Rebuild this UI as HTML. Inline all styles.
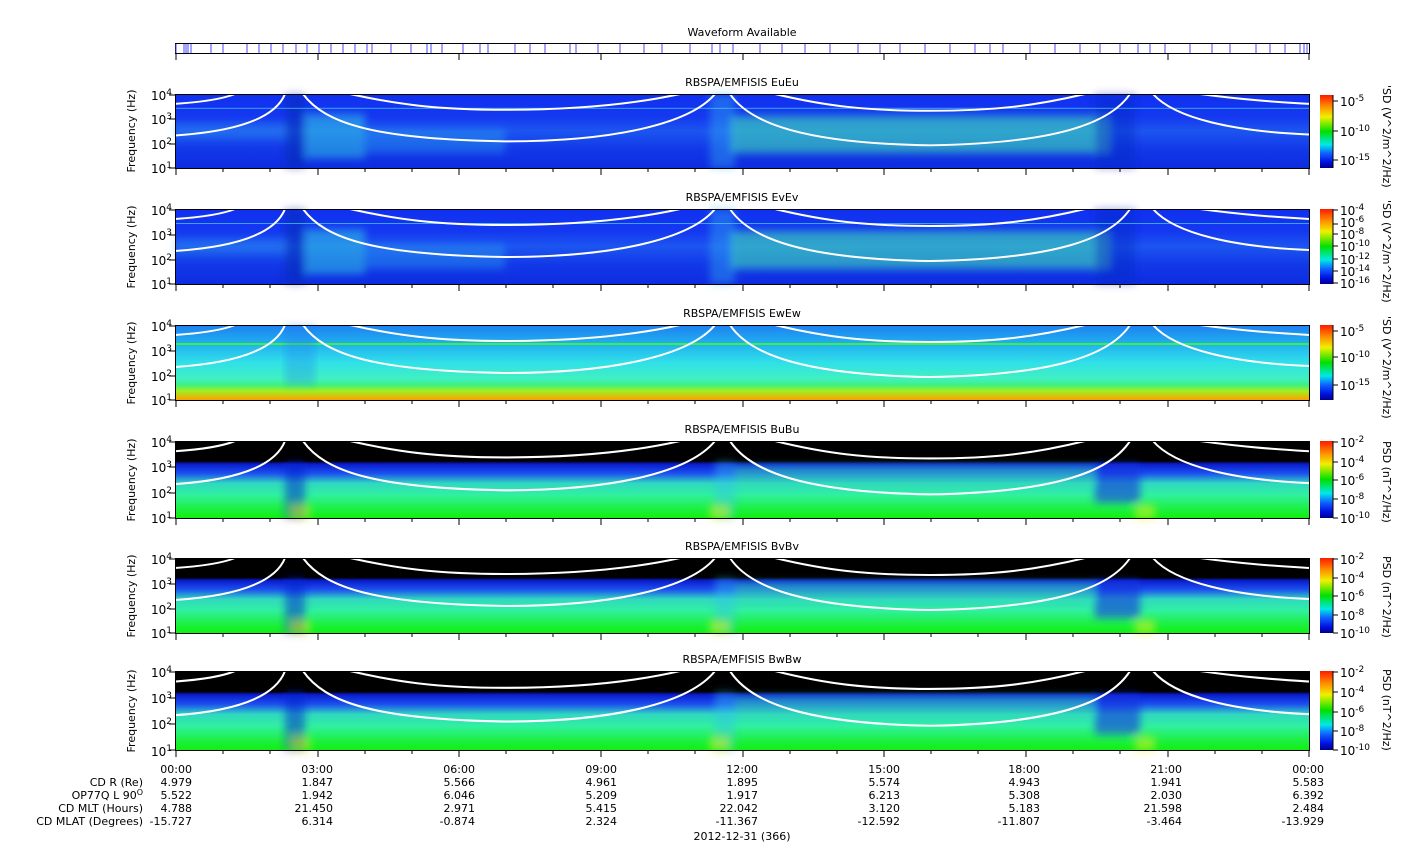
<!DOCTYPE html>
<html><head><meta charset="utf-8"><style>
html,body{margin:0;padding:0;background:#fff;}
svg{display:block;font-family:"DejaVu Sans","Liberation Sans",sans-serif;}
</style></head><body>
<svg width="1408" height="859" viewBox="0 0 1408 859" xmlns="http://www.w3.org/2000/svg">
<defs>
<linearGradient id="cb" x1="0" y1="0" x2="0" y2="1">
<stop offset="0" stop-color="#ff1a00"/><stop offset="0.15" stop-color="#ff8800"/><stop offset="0.3" stop-color="#f0f000"/><stop offset="0.5" stop-color="#00e000"/><stop offset="0.68" stop-color="#00e8e8"/><stop offset="0.8" stop-color="#1060ff"/><stop offset="0.92" stop-color="#0010e0"/><stop offset="1" stop-color="#00008a"/>
</linearGradient>
<linearGradient id="gE" x1="0" y1="0" x2="0" y2="1">
<stop offset="0" stop-color="#1030f0"/><stop offset="0.3" stop-color="#1438f0"/><stop offset="0.5" stop-color="#1c55f0"/><stop offset="0.75" stop-color="#1238e8"/><stop offset="1" stop-color="#0e2ce0"/>
</linearGradient>
<linearGradient id="gW" x1="0" y1="0" x2="0" y2="1">
<stop offset="0" stop-color="#1e80f0"/><stop offset="0.25" stop-color="#20b0f0"/><stop offset="0.5" stop-color="#30e0e8"/><stop offset="0.72" stop-color="#40f0c0"/><stop offset="0.8" stop-color="#40f080"/><stop offset="0.88" stop-color="#a0f020"/><stop offset="1" stop-color="#ffa000"/>
</linearGradient>
<linearGradient id="gB" x1="0" y1="0" x2="0" y2="1">
<stop offset="0" stop-color="#000"/><stop offset="0.26" stop-color="#000"/><stop offset="0.3" stop-color="#0a1ccc"/><stop offset="0.42" stop-color="#1c50f0"/><stop offset="0.55" stop-color="#30d8c0"/><stop offset="0.7" stop-color="#30f0a0"/><stop offset="0.85" stop-color="#20f050"/><stop offset="1" stop-color="#10f010"/>
</linearGradient>
<filter id="bl" x="-10%" y="-30%" width="120%" height="160%"><feGaussianBlur stdDeviation="4"/></filter>
<g id="curves" fill="none" stroke="#fff" stroke-width="2">
<path d="M0,42 C60,38 100,25 110,0"/>
<path d="M0,10 C30,8 50,4 60,0"/>
<path d="M128,0 C150,30 200,46 330,48 C440,48 515,30 540,0"/>
<path d="M175,0 C220,10 260,16 330,16 C400,16 460,10 505,0"/>
<path d="M555,0 C575,30 630,50 755,52 C880,50 935,30 955,0"/>
<path d="M600,0 C650,12 690,17 755,17 C820,17 860,12 910,0"/>
<path d="M978,0 C1000,25 1060,38 1134,41"/>
<path d="M1025,0 C1070,6 1100,8 1134,10"/>
</g>
<g id="eblobs" filter="url(#bl)">
<rect x="130" y="20" width="60" height="45" fill="#30e0e0" opacity="0.45"/>
<rect x="190" y="35" width="140" height="25" fill="#30c0f0" opacity="0.3"/>
<rect x="555" y="22" width="380" height="38" fill="#40e8b0" opacity="0.55"/>
<rect x="110" y="0" width="20" height="75" fill="#0a20a0" opacity="0.4"/>
<rect x="535" y="0" width="25" height="75" fill="#30b0f0" opacity="0.4"/>
<rect x="920" y="0" width="40" height="75" fill="#0a20c0" opacity="0.4"/>
<rect x="0" y="30" width="110" height="15" fill="#30a0f0" opacity="0.3"/>
</g>
<g id="bblobs" filter="url(#bl)">
<rect x="110" y="20" width="20" height="56" fill="#0a20d0" opacity="0.5"/>
<rect x="540" y="20" width="20" height="56" fill="#30c0f0" opacity="0.4"/>
<rect x="920" y="22" width="45" height="38" fill="#1030e0" opacity="0.6"/>
<rect x="560" y="24" width="360" height="18" fill="#30e0b0" opacity="0.5"/>
<rect x="115" y="62" width="20" height="14" fill="#f0f020" opacity="0.5"/>
<rect x="535" y="62" width="20" height="14" fill="#f0f020" opacity="0.5"/>
<rect x="960" y="62" width="20" height="14" fill="#f0f020" opacity="0.5"/>
</g>
</defs>

<g font-size="11" fill="#000">
<text x="742" y="36" text-anchor="middle">Waveform Available</text>
<rect x="175.5" y="43.5" width="1134" height="10" fill="#fff" stroke="#000"/>
<g stroke="#4a4aff" stroke-width="1">
<path d="M176,44v9M184,44v9M186,44v9M188,44v9M191,44v9M211,44v9M223,44v9M247,44v9M259,44v9M271,44v9M283,44v9M296,44v9M307,44v9M319,44v9M331,44v9M343,44v9M355,44v9M367,44v9M372,44v9M391,44v9M411,44v9M427,44v9M431,44v9M442,44v9M463,44v9M480,44v9M488,44v9M515,44v9M530,44v9M545,44v9M570,44v9M576,44v9M598,44v9M620,44v9M644,44v9M662,44v9M690,44v9M712,44v9M720,44v9M733,44v9M760,44v9M782,44v9M805,44v9M830,44v9M858,44v9M880,44v9M900,44v9M925,44v9M950,44v9M975,44v9M990,44v9M1003,44v9M1030,44v9M1055,44v9M1080,44v9M1100,44v9M1120,44v9M1138,44v9M1150,44v9M1165,44v9M1190,44v9M1212,44v9M1230,44v9M1256,44v9M1270,44v9M1285,44v9M1300,44v9M1304,44v9M1307,44v9"/>
</g>
<path d="M176,54v6M318,54v6M459,54v6M601,54v6M743,54v6M884,54v6M1026,54v6M1168,54v6M1309,54v6" stroke="#000"/>
</g>

<g transform="translate(175,94) scale(1,0.987)">
<rect width="1134" height="75" fill="url(#gE)"/>
<use href="#eblobs"/>
<rect x="0" y="14" width="1134" height="1" fill="#50d0f0" opacity="0.7"/>
<use href="#curves"/>
</g>
<g transform="translate(175,209)">
<rect width="1134" height="75" fill="url(#gE)"/>
<use href="#eblobs"/>
<rect x="0" y="14" width="1134" height="1" fill="#50d0f0" opacity="0.7"/>
<use href="#curves"/>
</g>
<g transform="translate(175,325)">
<rect width="1134" height="75" fill="url(#gW)"/>
<rect x="0" y="18" width="1134" height="2" fill="#40f040"/>
<rect x="110" y="0" width="30" height="60" fill="#2080f0" opacity="0.3" filter="url(#bl)"/>
<use href="#curves"/>
</g>
<g transform="translate(175,441) scale(1,1.027)">
<rect width="1134" height="75" fill="url(#gB)"/>
<use href="#bblobs"/>
<use href="#curves"/>
</g>
<g transform="translate(175,558)">
<rect width="1134" height="75" fill="url(#gB)"/>
<use href="#bblobs"/>
<use href="#curves"/>
</g>
<g transform="translate(175,671) scale(1,1.053)">
<rect width="1134" height="75" fill="url(#gB)"/>
<use href="#bblobs"/>
<use href="#curves"/>
</g>

<g font-size="11" fill="#000">
<g fill="none" stroke="#000">
<rect x="175.5" y="94.5" width="1134" height="74"/>
<rect x="175.5" y="209.5" width="1134" height="75"/>
<rect x="175.5" y="325.5" width="1134" height="75"/>
<rect x="175.5" y="441.5" width="1134" height="77"/>
<rect x="175.5" y="558.5" width="1134" height="75"/>
<rect x="175.5" y="671.5" width="1134" height="79"/>
</g>
<text x="742" y="86" text-anchor="middle">RBSPA/EMFISIS  EuEu</text>
<text x="742" y="201" text-anchor="middle">RBSPA/EMFISIS  EvEv</text>
<text x="742" y="317" text-anchor="middle">RBSPA/EMFISIS  EwEw</text>
<text x="742" y="433" text-anchor="middle">RBSPA/EMFISIS  BuBu</text>
<text x="742" y="550" text-anchor="middle">RBSPA/EMFISIS  BvBv</text>
<text x="742" y="663" text-anchor="middle">RBSPA/EMFISIS  BwBw</text>

<text transform="translate(135,131) rotate(-90)" text-anchor="middle">Frequency (Hz)</text>
<text transform="translate(135,247) rotate(-90)" text-anchor="middle">Frequency (Hz)</text>
<text transform="translate(135,363) rotate(-90)" text-anchor="middle">Frequency (Hz)</text>
<text transform="translate(135,480) rotate(-90)" text-anchor="middle">Frequency (Hz)</text>
<text transform="translate(135,596) rotate(-90)" text-anchor="middle">Frequency (Hz)</text>
<text transform="translate(135,711) rotate(-90)" text-anchor="middle">Frequency (Hz)</text>
<g font-size="12">
<text x="151" y="100">10<tspan font-size="9" dy="-5">4</tspan></text><text x="151" y="124">10<tspan font-size="9" dy="-5">3</tspan></text><text x="151" y="149">10<tspan font-size="9" dy="-5">2</tspan></text><text x="151" y="173">10<tspan font-size="9" dy="-5">1</tspan></text>
<text x="151" y="215">10<tspan font-size="9" dy="-5">4</tspan></text><text x="151" y="240">10<tspan font-size="9" dy="-5">3</tspan></text><text x="151" y="265">10<tspan font-size="9" dy="-5">2</tspan></text><text x="151" y="289">10<tspan font-size="9" dy="-5">1</tspan></text>
<text x="151" y="331">10<tspan font-size="9" dy="-5">4</tspan></text><text x="151" y="356">10<tspan font-size="9" dy="-5">3</tspan></text><text x="151" y="381">10<tspan font-size="9" dy="-5">2</tspan></text><text x="151" y="405">10<tspan font-size="9" dy="-5">1</tspan></text>
<text x="151" y="447">10<tspan font-size="9" dy="-5">4</tspan></text><text x="151" y="472">10<tspan font-size="9" dy="-5">3</tspan></text><text x="151" y="498">10<tspan font-size="9" dy="-5">2</tspan></text><text x="151" y="523">10<tspan font-size="9" dy="-5">1</tspan></text>
<text x="151" y="564">10<tspan font-size="9" dy="-5">4</tspan></text><text x="151" y="589">10<tspan font-size="9" dy="-5">3</tspan></text><text x="151" y="614">10<tspan font-size="9" dy="-5">2</tspan></text><text x="151" y="638">10<tspan font-size="9" dy="-5">1</tspan></text>
<text x="151" y="677">10<tspan font-size="9" dy="-5">4</tspan></text><text x="151" y="703">10<tspan font-size="9" dy="-5">3</tspan></text><text x="151" y="729">10<tspan font-size="9" dy="-5">2</tspan></text><text x="151" y="756">10<tspan font-size="9" dy="-5">1</tspan></text>
</g>
<g stroke="#000" fill="none">
<path d="M169,95h6M169,119h6M169,144h6M169,168h6 M169,210h6M169,235h6M169,260h6M169,284h6 M169,326h6M169,351h6M169,376h6M169,400h6 M169,442h6M169,467h6M169,493h6M169,518h6 M169,559h6M169,584h6M169,609h6M169,633h6 M169,672h6M169,698h6M169,724h6M169,750h6"/>
<path id="tk" d="M176,169v6M318,169v6M459,169v6M601,169v6M743,169v6M884,169v6M1026,169v6M1168,169v6M1309,169v6M223,169v3M270,169v3M365,169v3M412,169v3M506,169v3M553,169v3M648,169v3M695,169v3M790,169v3M837,169v3M931,169v3M978,169v3M1073,169v3M1120,169v3M1215,169v3M1262,169v3"/>
<use href="#tk" y="116"/><use href="#tk" y="232"/><use href="#tk" y="350"/><use href="#tk" y="465"/><use href="#tk" y="582"/>
</g>
<rect x="1320" y="95" width="13" height="73" fill="url(#cb)"/>
<rect x="1320" y="209" width="13" height="75" fill="url(#cb)"/>
<rect x="1320" y="325" width="13" height="75" fill="url(#cb)"/>
<rect x="1320" y="441" width="13" height="77" fill="url(#cb)"/>
<rect x="1320" y="558" width="13" height="75" fill="url(#cb)"/>
<rect x="1320" y="671" width="13" height="79" fill="url(#cb)"/>
<g stroke="#000" fill="none">
<path d="M1333,95v73M1333,209v75M1333,325v75M1333,441v77M1333,558v75M1333,671v79"/>
<path d="M1333,101h5M1333,131h5M1333,160h5M1333,210h5M1333,224h5M1333,234h5M1333,246h5M1333,259h5M1333,271h5M1333,283h5M1333,331h5M1333,357h5M1333,385h5M1333,442h5M1333,462h5M1333,480h5M1333,499h5M1333,518h5M1333,559h5M1333,578h5M1333,596h5M1333,615h5M1333,633h5M1333,672h5M1333,692h5M1333,712h5M1333,731h5M1333,750h5"/>
</g>
<g font-size="12">
<text x="1340" y="106">10<tspan font-size="9" dy="-5">-5</tspan></text><text x="1340" y="136">10<tspan font-size="9" dy="-5">-10</tspan></text><text x="1340" y="165">10<tspan font-size="9" dy="-5">-15</tspan></text>
<text x="1340" y="215">10<tspan font-size="9" dy="-5">-4</tspan></text><text x="1340" y="227">10<tspan font-size="9" dy="-5">-6</tspan></text><text x="1340" y="239">10<tspan font-size="9" dy="-5">-8</tspan></text><text x="1340" y="251">10<tspan font-size="9" dy="-5">-10</tspan></text><text x="1340" y="264">10<tspan font-size="9" dy="-5">-12</tspan></text><text x="1340" y="276">10<tspan font-size="9" dy="-5">-14</tspan></text><text x="1340" y="288">10<tspan font-size="9" dy="-5">-16</tspan></text>
<text x="1340" y="336">10<tspan font-size="9" dy="-5">-5</tspan></text><text x="1340" y="362">10<tspan font-size="9" dy="-5">-10</tspan></text><text x="1340" y="390">10<tspan font-size="9" dy="-5">-15</tspan></text>
<text x="1340" y="447">10<tspan font-size="9" dy="-5">-2</tspan></text><text x="1340" y="467">10<tspan font-size="9" dy="-5">-4</tspan></text><text x="1340" y="485">10<tspan font-size="9" dy="-5">-6</tspan></text><text x="1340" y="504">10<tspan font-size="9" dy="-5">-8</tspan></text><text x="1340" y="523">10<tspan font-size="9" dy="-5">-10</tspan></text>
<text x="1340" y="564">10<tspan font-size="9" dy="-5">-2</tspan></text><text x="1340" y="583">10<tspan font-size="9" dy="-5">-4</tspan></text><text x="1340" y="601">10<tspan font-size="9" dy="-5">-6</tspan></text><text x="1340" y="620">10<tspan font-size="9" dy="-5">-8</tspan></text><text x="1340" y="638">10<tspan font-size="9" dy="-5">-10</tspan></text>
<text x="1340" y="677">10<tspan font-size="9" dy="-5">-2</tspan></text><text x="1340" y="697">10<tspan font-size="9" dy="-5">-4</tspan></text><text x="1340" y="717">10<tspan font-size="9" dy="-5">-6</tspan></text><text x="1340" y="736">10<tspan font-size="9" dy="-5">-8</tspan></text><text x="1340" y="755">10<tspan font-size="9" dy="-5">-10</tspan></text>
</g>
<g font-size="11">
<text transform="translate(1383,85) rotate(90)">'SD (V^2/m^2/Hz)</text>
<text transform="translate(1383,200) rotate(90)">'SD (V^2/m^2/Hz)</text>
<text transform="translate(1383,316) rotate(90)">'SD (V^2/m^2/Hz)</text>
<text transform="translate(1383,441) rotate(90)">PSD (nT^2/Hz)</text>
<text transform="translate(1383,556) rotate(90)">PSD (nT^2/Hz)</text>
<text transform="translate(1383,669) rotate(90)">PSD (nT^2/Hz)</text>
</g>
<g text-anchor="end">
<text x="143" y="786">CD R (Re)</text>
<text x="143" y="799">OP77Q L 90<tspan font-size="8" dy="-4">O</tspan></text>
<text x="143" y="812">CD MLT (Hours)</text>
<text x="143" y="825">CD MLAT (Degrees)</text>
<text x="192" y="773">00:00</text><text x="192" y="786">4.979</text><text x="192" y="799">5.522</text><text x="192" y="812">4.788</text><text x="192" y="825">-15.727</text>
<text x="333" y="773">03:00</text><text x="333" y="786">1.847</text><text x="333" y="799">1.942</text><text x="333" y="812">21.450</text><text x="333" y="825">6.314</text>
<text x="475" y="773">06:00</text><text x="475" y="786">5.566</text><text x="475" y="799">6.046</text><text x="475" y="812">2.971</text><text x="475" y="825">-0.874</text>
<text x="617" y="773">09:00</text><text x="617" y="786">4.961</text><text x="617" y="799">5.209</text><text x="617" y="812">5.415</text><text x="617" y="825">2.324</text>
<text x="758" y="773">12:00</text><text x="758" y="786">1.895</text><text x="758" y="799">1.917</text><text x="758" y="812">22.042</text><text x="758" y="825">-11.367</text>
<text x="900" y="773">15:00</text><text x="900" y="786">5.574</text><text x="900" y="799">6.213</text><text x="900" y="812">3.120</text><text x="900" y="825">-12.592</text>
<text x="1040" y="773">18:00</text><text x="1040" y="786">4.943</text><text x="1040" y="799">5.308</text><text x="1040" y="812">5.183</text><text x="1040" y="825">-11.807</text>
<text x="1182" y="773">21:00</text><text x="1182" y="786">1.941</text><text x="1182" y="799">2.030</text><text x="1182" y="812">21.598</text><text x="1182" y="825">-3.464</text>
<text x="1324" y="773">00:00</text><text x="1324" y="786">5.583</text><text x="1324" y="799">6.392</text><text x="1324" y="812">2.484</text><text x="1324" y="825">-13.929</text>
</g>
<text x="742" y="840" text-anchor="middle">2012-12-31 (366)</text>
</g>
</svg>
</body></html>
